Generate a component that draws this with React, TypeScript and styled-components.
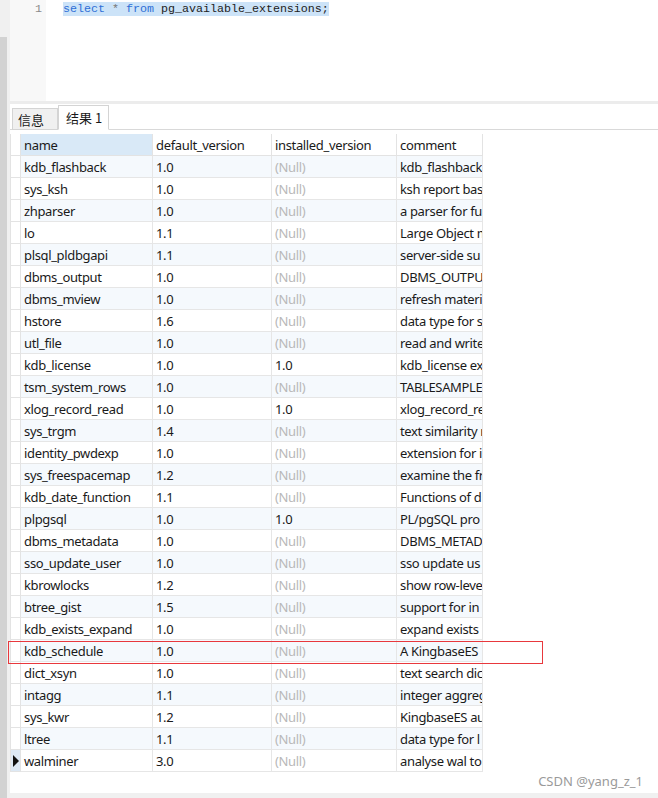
import React from 'react';
import styled, { createGlobalStyle } from 'styled-components';

const GlobalStyle = createGlobalStyle`
  html, body {
    margin: 0;
    padding: 0;
    background: #ffffff;
  }
  body {
    font-family: "Noto Sans", "Noto Sans CJK SC", sans-serif;
  }
`;

interface ExtRow {
    name: string;
    def: string;
    installed: string | null;
    comment: string;
}

const rows: ExtRow[] = [
    { name: 'kdb_flashback', def: '1.0', installed: null, comment: 'kdb_flashback' },
    { name: 'sys_ksh', def: '1.0', installed: null, comment: 'ksh report bas' },
    { name: 'zhparser', def: '1.0', installed: null, comment: 'a parser for fu' },
    { name: 'lo', def: '1.1', installed: null, comment: 'Large Object m' },
    { name: 'plsql_pldbgapi', def: '1.1', installed: null, comment: 'server-side su' },
    { name: 'dbms_output', def: '1.0', installed: null, comment: 'DBMS_OUTPU' },
    { name: 'dbms_mview', def: '1.0', installed: null, comment: 'refresh materi' },
    { name: 'hstore', def: '1.6', installed: null, comment: 'data type for s' },
    { name: 'utl_file', def: '1.0', installed: null, comment: 'read and write' },
    { name: 'kdb_license', def: '1.0', installed: '1.0', comment: 'kdb_license ex' },
    { name: 'tsm_system_rows', def: '1.0', installed: null, comment: 'TABLESAMPLE' },
    { name: 'xlog_record_read', def: '1.0', installed: '1.0', comment: 'xlog_record_re' },
    { name: 'sys_trgm', def: '1.4', installed: null, comment: 'text similarity r' },
    { name: 'identity_pwdexp', def: '1.0', installed: null, comment: 'extension for i' },
    { name: 'sys_freespacemap', def: '1.2', installed: null, comment: 'examine the fr' },
    { name: 'kdb_date_function', def: '1.1', installed: null, comment: 'Functions of d' },
    { name: 'plpgsql', def: '1.0', installed: '1.0', comment: 'PL/pgSQL pro' },
    { name: 'dbms_metadata', def: '1.0', installed: null, comment: 'DBMS_METAD' },
    { name: 'sso_update_user', def: '1.0', installed: null, comment: 'sso update us' },
    { name: 'kbrowlocks', def: '1.2', installed: null, comment: 'show row-leve' },
    { name: 'btree_gist', def: '1.5', installed: null, comment: 'support for in' },
    { name: 'kdb_exists_expand', def: '1.0', installed: null, comment: 'expand exists' },
    { name: 'kdb_schedule', def: '1.0', installed: null, comment: 'A KingbaseES' },
    { name: 'dict_xsyn', def: '1.0', installed: null, comment: 'text search dic' },
    { name: 'intagg', def: '1.1', installed: null, comment: 'integer aggreg' },
    { name: 'sys_kwr', def: '1.2', installed: null, comment: 'KingbaseES au' },
    { name: 'ltree', def: '1.1', installed: null, comment: 'data type for l' },
    { name: 'walminer', def: '3.0', installed: null, comment: 'analyse wal to' },
];

const Page = styled.div`
    position: relative;
    display: flex;
    width: 658px;
    height: 798px;
    overflow: hidden;
`;

const LeftStrip = styled.div`
    width: 10px;
    display: flex;
    flex-direction: column;
    background: #f0f0f0;
`;

const StripTop = styled.div`
    height: 37px;
`;

const StripBar = styled.div`
    flex: 1;
    width: 7px;
    background: #d2d2d2;
`;

const Main = styled.div`
    flex: 1;
    display: flex;
    flex-direction: column;
    min-width: 0;
`;

const Editor = styled.div`
    height: 101px;
    display: flex;
    font-family: "Liberation Mono", "DejaVu Sans Mono", monospace;
    font-size: 11.67px;
`;

const Gutter = styled.div`
    width: 36px;
    background: #f8f8f8;
    color: #8a8a8a;
    text-align: right;
    padding: 2px 4px 0 0;
    box-sizing: border-box;
    line-height: 14px;
`;

const CodeArea = styled.div`
    flex: 1;
    padding: 2px 0 0 17px;
    line-height: 14px;
`;

const Selection = styled.span`
    background: #cce3f8;
    white-space: pre;
    color: #222;
`;

const Keyword = styled.span`
    color: #2f6fd6;
`;

const Op = styled.span`
    color: #777;
`;

const Divider = styled.div`
    height: 3px;
    background: #ececec;
`;

const TabBar = styled.div`
    height: 26px;
    display: flex;
    align-items: flex-end;
    padding-left: 2px;
    border-bottom: 1px solid #d9d9d9;
    box-sizing: border-box;
`;

const Tab = styled.div<{ active?: boolean }>`
    height: ${ props => (props.active ? '25px' : '22px') };
    width: ${ props => (props.active ? '51px' : '46px') };
    padding-left: ${ props => (props.active ? '7px' : '5px') };
    margin-bottom: -1px;
    display: flex;
    align-items: center;
    white-space: nowrap;
    font-family: "Noto Sans CJK SC", "Noto Sans", sans-serif;
    font-size: 13px;
    color: #1a1a1a;
    background: ${ props => (props.active ? '#ffffff' : '#f0f0f0') };
    border: 1px solid #d4d4d4;
    border-bottom-color: ${ props => (props.active ? '#ffffff' : '#d4d4d4') };
    box-sizing: border-box;
`;

const ResultArea = styled.div`
    flex: 1;
    padding-top: 4px;
`;

const Grid = styled.div`
    display: grid;
    grid-template-columns: 11px 132px 119px 125px 86px;
    grid-auto-rows: 22px;
    width: 473px;
    font-size: 13px;
    letter-spacing: -0.35px;
`;

const HeadCell = styled.div<{ selected?: boolean }>`
    display: flex;
    align-items: center;
    padding-left: 3px;
    white-space: nowrap;
    overflow: hidden;
    color: #1a1a1a;
    background: ${ props => (props.selected ? '#d9e9f7' : '#ffffff') };
    border-right: 1px solid #e3e3e3;
    border-bottom: 1px solid #e3e3e3;
`;

const Cell = styled.div<{ tint?: boolean; muted?: boolean }>`
    display: flex;
    align-items: center;
    padding-left: 3px;
    white-space: nowrap;
    overflow: hidden;
    color: ${ props => (props.muted ? '#b8b8b8' : '#1a1a1a') };
    background: ${ props => (props.tint ? '#f5f9fd' : '#ffffff') };
    border-right: 1px solid #e6e6e6;
    border-bottom: 1px solid #e6e6e6;
`;

const Indicator = styled.div<{ current?: boolean }>`
    display: flex;
    align-items: center;
    justify-content: center;
    background: ${ props => (props.current ? '#dde9f5' : '#ffffff') };
    border-left: 1px solid #e3e3e3;
    border-right: 1px solid #e3e3e3;
    border-bottom: 1px solid #e3e3e3;
`;

const Arrow = styled.div`
    width: 0;
    height: 0;
    border-top: 6px solid transparent;
    border-bottom: 6px solid transparent;
    border-left: 6px solid #111;
    margin-left: 1px;
`;

const BottomBar = styled.div`
    height: 5px;
    background: #f0f0f0;
`;

const Highlight = styled.div`
    position: absolute;
    left: 8px;
    top: 641px;
    width: 535px;
    height: 23px;
    border: 1px solid #e8383d;
    box-sizing: border-box;
    pointer-events: none;
`;

const Watermark = styled.div`
    position: absolute;
    right: 15px;
    top: 772px;
    font-size: 13px;
    color: #9a9a9a;
    font-family: "Noto Sans", sans-serif;
`;

const App = () => {
    return (
        <>
            <GlobalStyle/>
            <Page>
                <LeftStrip>
                    <StripTop/>
                    <StripBar/>
                </LeftStrip>
                <Main>
                    <Editor>
                        <Gutter>1</Gutter>
                        <CodeArea>
                            <Selection>
                                <Keyword>select</Keyword> <Op>*</Op> <Keyword>from</Keyword> pg_available_extensions;
                            </Selection>
                        </CodeArea>
                    </Editor>
                    <Divider/>
                    <TabBar>
                        <Tab>信息</Tab>
                        <Tab active>结果 1</Tab>
                    </TabBar>
                    <ResultArea>
                        <Grid>
                            <Indicator/>
                            <HeadCell selected>name</HeadCell>
                            <HeadCell>default_version</HeadCell>
                            <HeadCell>installed_version</HeadCell>
                            <HeadCell>comment</HeadCell>
                            { rows.map((row, index) => {
                                const tint = index % 2 === 0;
                                const current = index === rows.length - 1;
                                return (
                                    <React.Fragment key={ row.name }>
                                        <Indicator current={ current }>
                                            { current && <Arrow/> }
                                        </Indicator>
                                        <Cell tint={ tint }>{ row.name }</Cell>
                                        <Cell tint={ tint }>{ row.def }</Cell>
                                        <Cell tint={ tint } muted={ !row.installed }>
                                            { row.installed ?? '(Null)' }
                                        </Cell>
                                        <Cell tint={ tint }>{ row.comment }</Cell>
                                    </React.Fragment>
                                );
                            }) }
                        </Grid>
                    </ResultArea>
                    <BottomBar/>
                </Main>
                <Highlight/>
                <Watermark>CSDN @yang_z_1</Watermark>
            </Page>
        </>
    );
};

export default App;
